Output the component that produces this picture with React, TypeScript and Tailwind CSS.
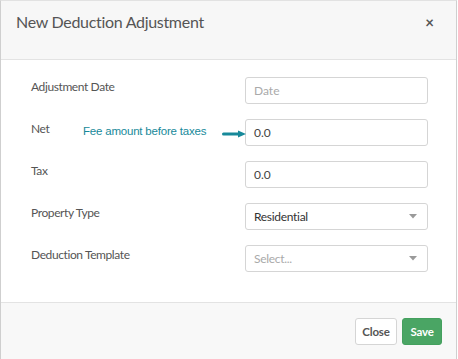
import React from "react";

const font = { fontFamily: "Lato, 'Noto Sans', sans-serif" };

function Caret() {
  return (
    <svg width="8" height="5" viewBox="0 0 8 5" className="shrink-0">
      <path d="M0 0 L8 0 L4 4.5 Z" fill="#9a9a9a" />
    </svg>
  );
}

function Row({ label, children, extra }: { label: string; children: React.ReactNode; extra?: React.ReactNode }) {
  return (
    <div className="relative flex items-center h-[27px]">
      <div className="w-[214px] text-[12px] tracking-[-0.4px] text-[#555] mb-[7px]">{label}</div>
      {extra}
      {children}
    </div>
  );
}

export default function App() {
  return (
    <div className="w-[458px] h-[359px] bg-white overflow-hidden" style={font}>
      <div className="h-full flex flex-col border border-b-0 border-[#cfcfcf] border-t-[#e2e2e2] mr-[1px]">
        <div className="h-[59px] shrink-0 bg-[#f7f7f7] border-b border-[#e3e3e3] flex items-start justify-between pl-[15px] pr-[22px] pt-[11px]">
          <div className="text-[16px] tracking-[-0.3px] text-[#555] leading-[20px]">New Deduction Adjustment</div>
          <div className="text-[15px] text-[#555] font-bold leading-[20px]">×</div>
        </div>
        <div className="flex-1 bg-white pt-[17px] pl-[30px] flex flex-col gap-[15px]">
          <Row label="Adjustment Date">
            <div className="w-[183px] h-[27px] border border-[#d5d5d5] rounded-[3px] flex items-center px-[8px] text-[12px] text-[#aaa]">Date</div>
          </Row>
          <Row
            label="Net"
            extra={
              <div className="absolute left-[52px] top-[4px] flex items-center">
                <span className="text-[11.5px] tracking-[-0.2px] text-[#17899a]" style={{ fontFamily: "'Liberation Sans', Arial, sans-serif" }}>
                  Fee amount before taxes
                </span>
                <svg width="24" height="8" viewBox="0 0 24 8" className="ml-[16px] mt-[4px]">
                  <path d="M1.5 4 L17 4" stroke="#17899a" strokeWidth="3" strokeLinecap="round" />
                  <path d="M16 0.5 L24 4 L16 7.5 Z" fill="#17899a" />
                </svg>
              </div>
            }
          >
            <div className="w-[183px] h-[27px] border border-[#d5d5d5] rounded-[3px] flex items-center px-[8px] text-[12px] text-[#444]">0.0</div>
          </Row>
          <Row label="Tax">
            <div className="w-[183px] h-[27px] border border-[#d5d5d5] rounded-[3px] flex items-center px-[8px] text-[12px] text-[#444]">0.0</div>
          </Row>
          <Row label="Property Type">
            <div className="w-[183px] h-[27px] border border-[#d5d5d5] rounded-[3px] flex items-center justify-between pl-[8px] pr-[10px] text-[12px] tracking-[-0.3px] text-[#333]">
              <span>Residential</span>
              <Caret />
            </div>
          </Row>
          <Row label="Deduction Template">
            <div className="w-[183px] h-[27px] border border-[#d5d5d5] rounded-[3px] flex items-center justify-between pl-[8px] pr-[10px] text-[12px] tracking-[-0.3px] text-[#aaa]">
              <span>Select...</span>
              <Caret />
            </div>
          </Row>
        </div>
        <div className="h-[57px] shrink-0 bg-[#f8f8f8] border-t border-[#e3e3e3] flex items-start justify-end gap-[5px] pr-[14px] pt-[15px]">
          <button className="w-[42px] h-[27px] bg-white border border-[#d5d5d5] rounded-[3px] text-[11.5px] tracking-[-0.2px] font-bold text-[#555]">Close</button>
          <button className="w-[40px] h-[27px] bg-[#4aa564] border border-[#44a05e] rounded-[3px] text-[11.5px] tracking-[-0.2px] font-bold text-white">Save</button>
        </div>
      </div>
    </div>
  );
}
